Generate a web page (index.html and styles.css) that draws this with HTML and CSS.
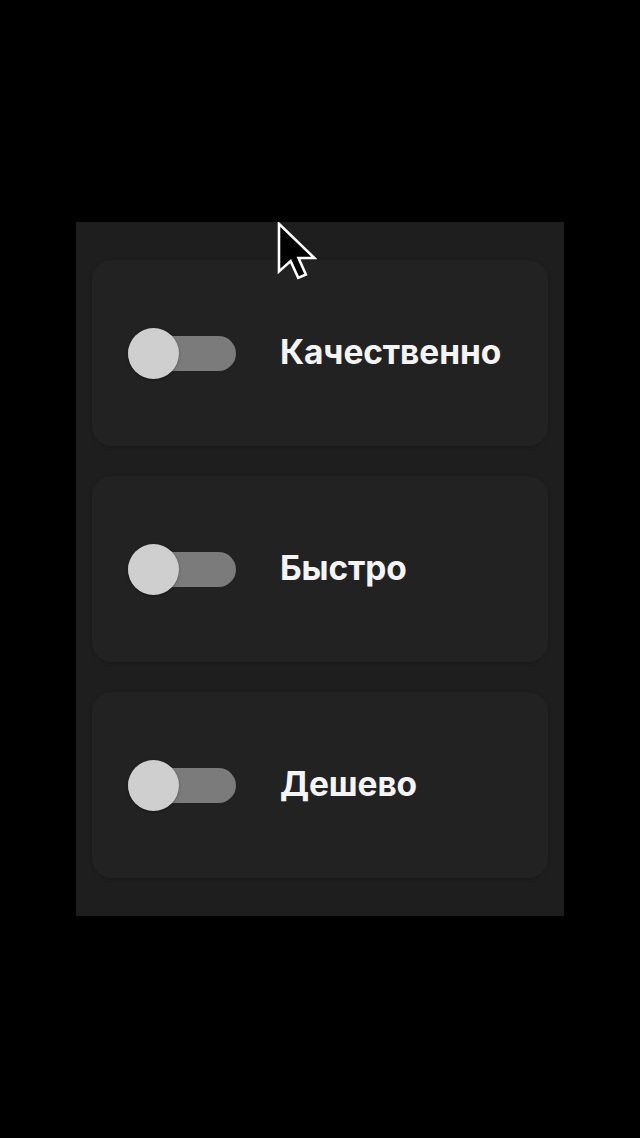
FILE: index.html
```html
<!DOCTYPE html>
<html lang="ru">
<head>
<meta charset="utf-8">
<title>Toggles</title>
<link rel="stylesheet" href="styles.css">
</head>
<body>
<main class="stage">
  <section class="panel">
    <div class="card">
      <span class="toggle"><span class="knob"></span></span>
      <span class="label">Качественно</span>
    </div>
    <div class="card">
      <span class="toggle"><span class="knob"></span></span>
      <span class="label">Быстро</span>
    </div>
    <div class="card">
      <span class="toggle"><span class="knob"></span></span>
      <span class="label">Дешево</span>
    </div>
    <svg class="cursor" width="40" height="58" viewBox="0 0 13 19" aria-hidden="true">
      <path d="M0.6 0.6 L0.6 16.2 L4.4 12.8 L6.9 18.3 L9.4 17.2 L7 11.8 L12.2 11.8 Z" fill="#000" stroke="#fff" stroke-width="0.85" stroke-linejoin="miter"/>
    </svg>
  </section>
</main>
</body>
</html>
```
FILE: styles.css
```css
* { box-sizing: border-box; }
html, body {
  margin: 0;
  padding: 0;
  background: #000;
}
.stage {
  min-height: 100vh;
  display: flex;
  align-items: center;
  justify-content: center;
}
.panel {
  position: relative;
  width: 488px;
  height: 694px;
  background: #1e1e1e;
  padding: 38px 16px;
  display: flex;
  flex-direction: column;
  gap: 30px;
}
.card {
  height: 186px;
  border-radius: 20px;
  background: #232223;
  box-shadow: 0 1px 4px rgba(0,0,0,0.18);
  display: flex;
  align-items: center;
  padding-left: 36px;
  gap: 44px;
}
.toggle {
  position: relative;
  width: 108px;
  height: 35px;
  border-radius: 18px;
  background: #7b7b7b;
  flex: none;
}
.knob {
  position: absolute;
  left: 0;
  top: -8px;
  width: 51px;
  height: 51px;
  border-radius: 50%;
  background: #cfcfcf;
  box-shadow: 0 1px 3px rgba(0,0,0,0.3);
}
.label {
  font-family: "Inter", "Noto Sans", sans-serif;
  font-weight: 700;
  font-size: 33.5px;
  color: #f4f4f4;
  letter-spacing: -0.1px;
  line-height: 1;
}
.cursor {
  position: absolute;
  left: 201px;
  top: 0px;
}
```
